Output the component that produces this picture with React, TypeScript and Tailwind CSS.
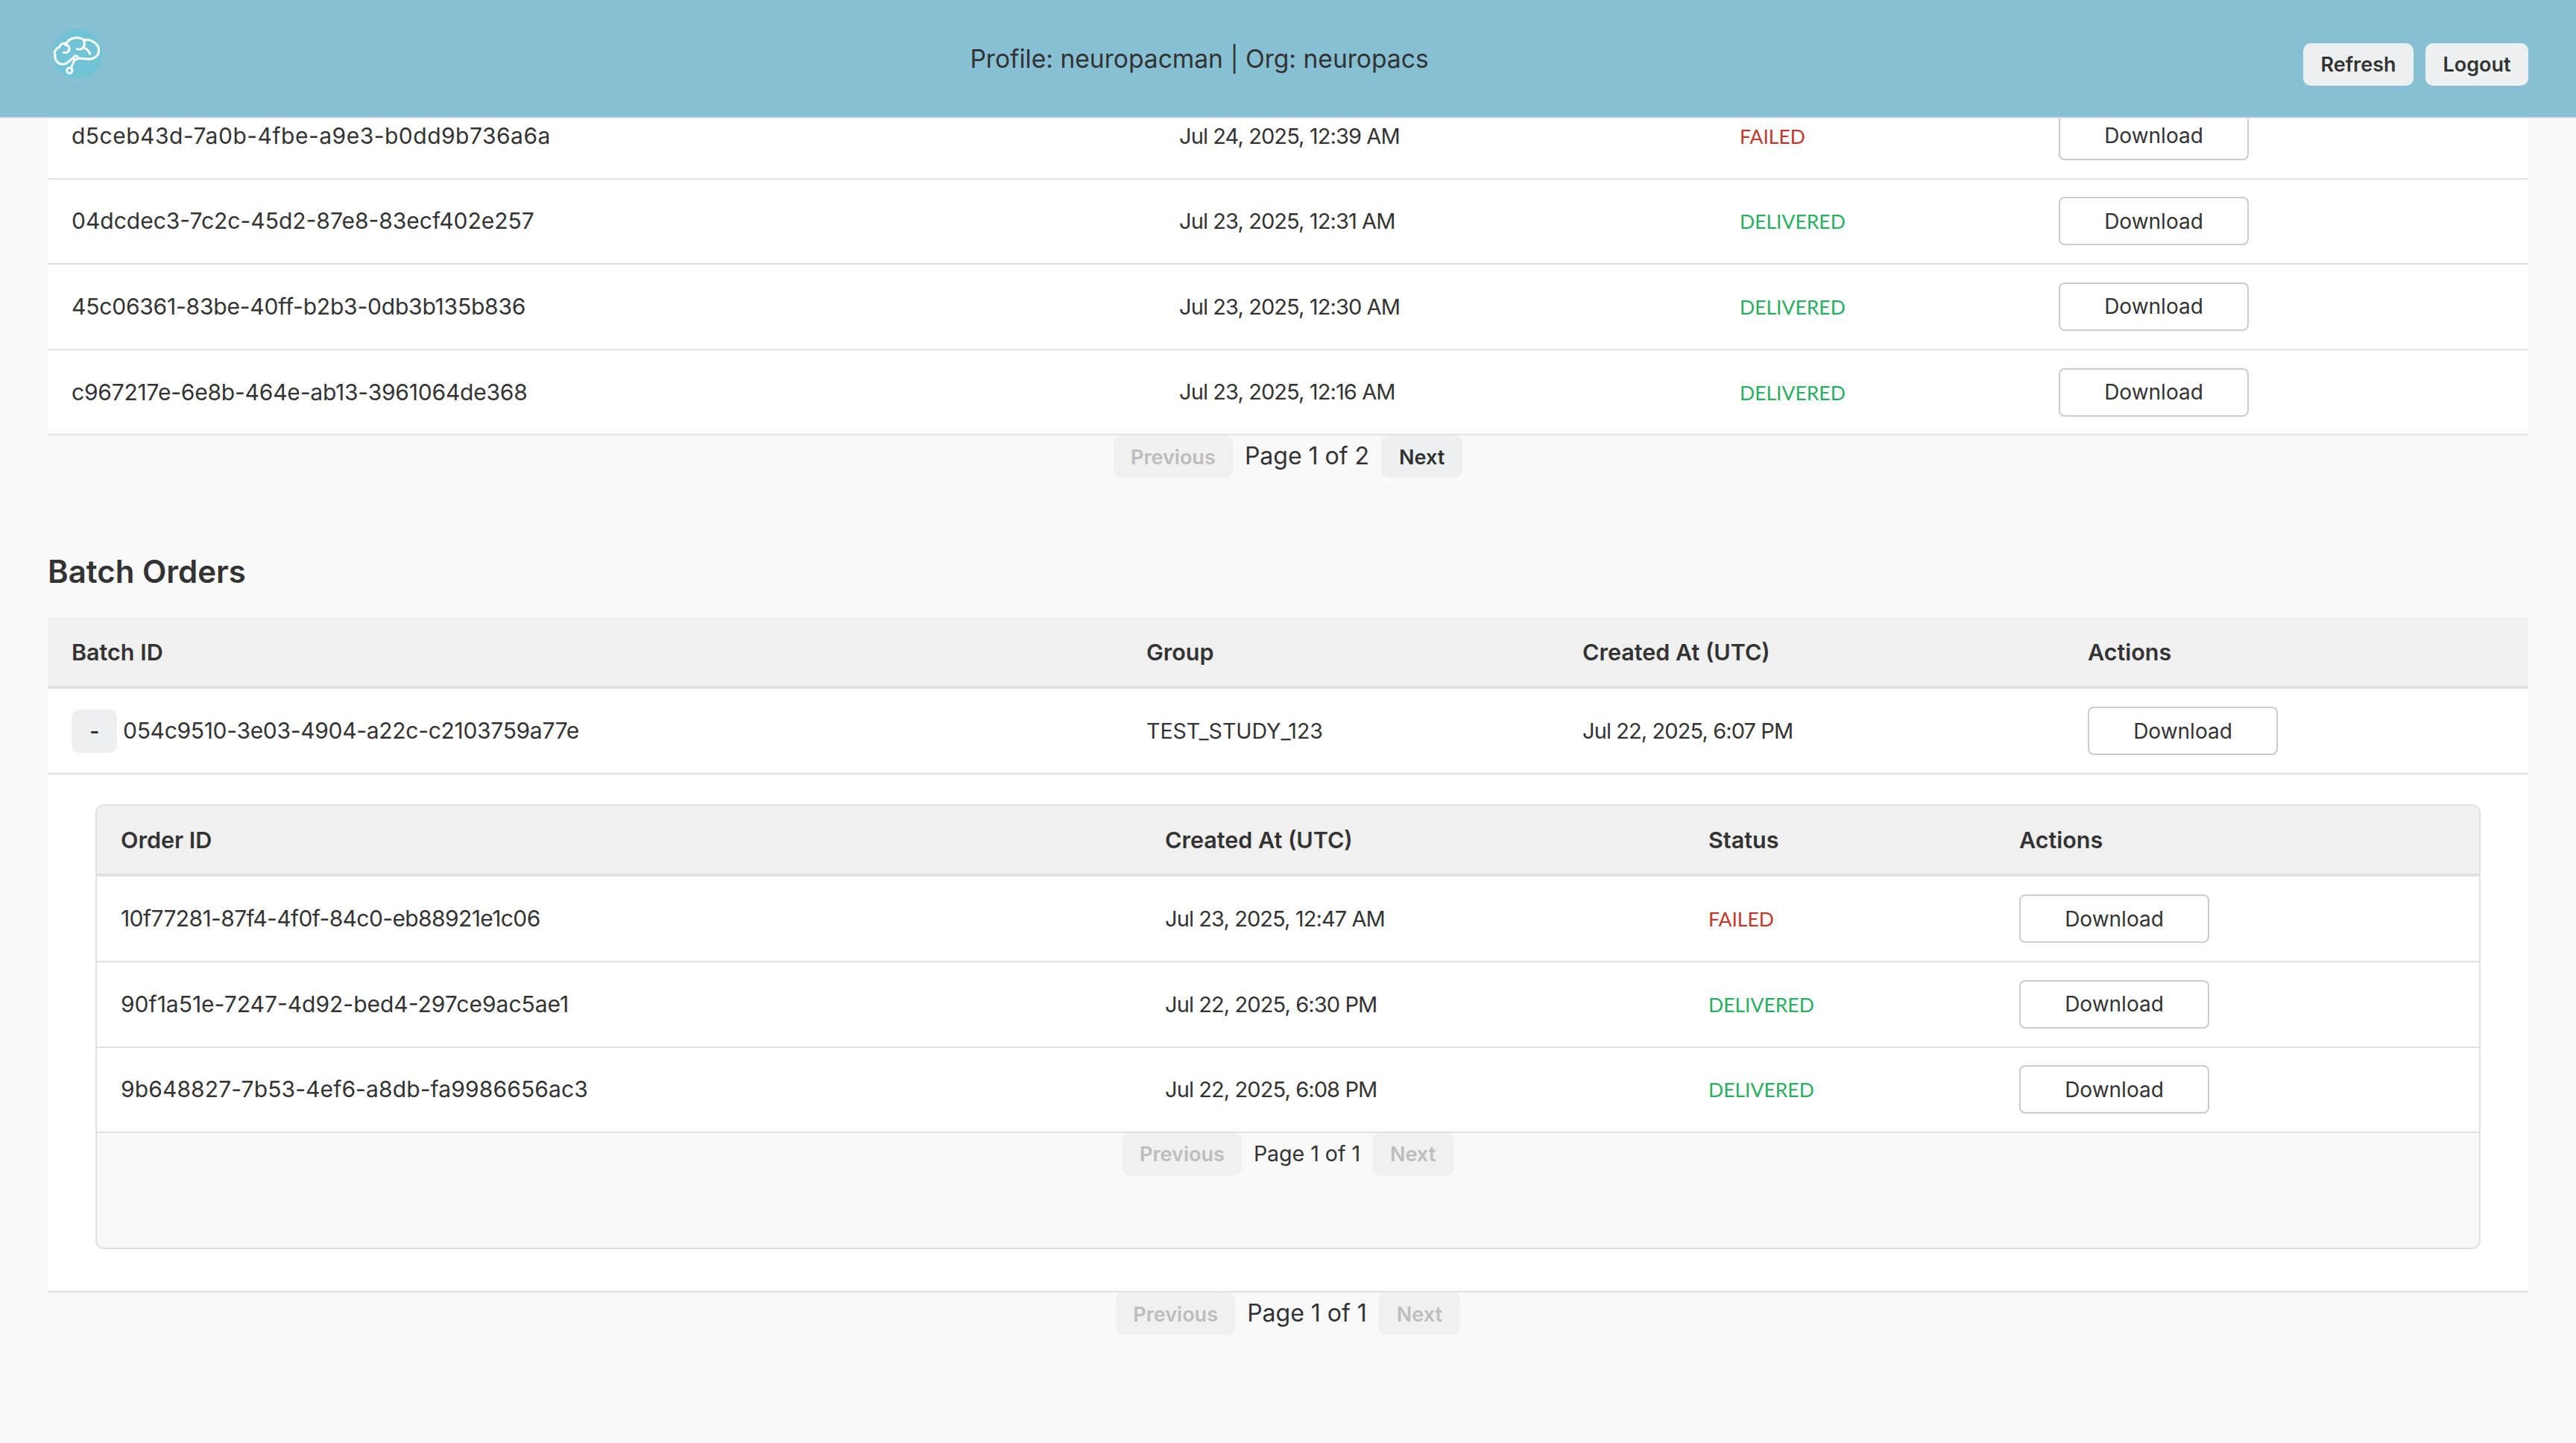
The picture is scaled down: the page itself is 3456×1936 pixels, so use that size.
import React from 'react';

const font = "[font-family:Inter,'Liberation_Sans',sans-serif]";

const Logo = () => (
    <svg viewBox="60 25 204 204" className="w-[68px] h-[68px] ml-[6px] -mr-[10px] mt-[38px]" fill="none" stroke="#fff" strokeWidth="9" strokeLinecap="round" strokeLinejoin="round">
        <circle cx="162" cy="127" r="100" fill="#71c3d6" stroke="none" />
        <path d="M147 143 C135 148 122 172 100 170 C82 168 68 150 72 132 C64 118 78 104 90 100 C92 88 108 82 118 86 C124 70 150 58 170 64 C180 66 186 70 190 72 C215 66 248 88 248 112 C248 135 230 150 205 149 L165 146" />
        <path d="M112 92 C126 92 132 102 128 114 C124 122 114 124 106 122" />
        <path d="M186 72 C194 84 190 104 174 110 L160 109" />
        <path d="M190 104 C202 108 208 118 212 128" />
        <circle cx="155" cy="143" r="8" />
        <path d="M150 151 L137 183" />
        <circle cx="130" cy="195" r="11" />
    </svg>
);

const DownloadButton = () => (
    <button className="w-[255px] h-[65px] bg-white border-2 border-[#ccc] rounded-[8px] text-[28px] text-[#333]">
        Download
    </button>
);

const Status = ({ value }: { value: string }) => (
    <span className={`[font-family:Lato,sans-serif] text-[26.5px] ${value === 'FAILED' ? 'text-[#c0392b]' : 'text-[#27ae60]'}`}>{value}</span>
);

const Pager = ({ page, canNext, text }: { page: string; canNext?: boolean; text: string }) => (
    <div className="flex justify-center items-start">
        <button className="w-[160px] h-[57px] pt-[2px] rounded-[10px] bg-[#f0f0f0] text-[#bdbdbd] text-[27px] font-semibold">Previous</button>
        <span className={`mx-4 text-[#333] ${text}`}>{page}</span>
        <button className={`w-[109px] h-[57px] pt-[2px] rounded-[10px] text-[27px] font-semibold ${canNext ? 'bg-[#ecf0f1] text-[#333]' : 'bg-[#f0f0f0] text-[#bdbdbd]'}`}>Next</button>
    </div>
);

const topOrders = [
    ['d5ceb43d-7a0b-4fbe-a9e3-b0dd9b736a6a', 'Jul 24, 2025, 12:39 AM', 'FAILED', 'tracking-[0.5px]'],
    ['04dcdec3-7c2c-45d2-87e8-83ecf402e257', 'Jul 23, 2025, 12:31 AM', 'DELIVERED', ''],
    ['45c06361-83be-40ff-b2b3-0db3b135b836', 'Jul 23, 2025, 12:30 AM', 'DELIVERED', 'tracking-[-0.2px]'],
    ['c967217e-6e8b-464e-ab13-3961064de368', 'Jul 23, 2025, 12:16 AM', 'DELIVERED', 'tracking-[-0.2px]'],
];

const batchOrders = [
    ['10f77281-87f4-4f0f-84c0-eb88921e1c06', 'Jul 23, 2025, 12:47 AM', 'FAILED', 'tracking-[-0.6px]'],
    ['90f1a51e-7247-4d92-bed4-297ce9ac5ae1', 'Jul 22, 2025, 6:30 PM', 'DELIVERED', ''],
    ['9b648827-7b53-4ef6-a8db-fa9986656ac3', 'Jul 22, 2025, 6:08 PM', 'DELIVERED', 'tracking-[0.12px]'],
];

export default function App() {
    return (
        <div className={`h-[1936px] overflow-hidden bg-[#f9f9f9] text-[#333] ${font}`}>
            {/* Header */}
            <header className="sticky top-0 z-10 h-[159px] bg-[#87c0d3] border-b-2 border-[#e0e0e0] flex justify-between items-start px-16">
                <Logo />
                <h1 className="mt-[57px] text-[33.6px] leading-[44px] font-normal text-[#333]">Profile: neuropacman | Org: neuropacs</h1>
                <div className="flex gap-4 mt-[58px]">
                    <button className="w-[148px] h-[57px] pt-[2px] rounded-[10px] bg-[#ecf0f1] text-[27px] font-semibold text-[#333]">Refresh</button>
                    <button className="w-[138px] h-[57px] pt-[2px] rounded-[10px] bg-[#ecf0f1] text-[27px] font-semibold text-[#333]">Logout</button>
                </div>
            </header>

            <main className="-mt-[33px] px-16">
                {/* Orders, scrolled under the header */}
                <div className="bg-white">
                    {topOrders.map((o) => (
                        <div key={o[0]} className="h-[114.6px] grid grid-cols-[1486px_752px_428px_662px] items-center border-b-2 border-[#e0e0e0] text-[30px]">
                            <div className={`pl-8 ${o[3]}`}>{o[0]}</div>
                            <div className="pl-8 text-[29px] tracking-[-0.9px]">{o[1]}</div>
                            <div className="pl-8"><Status value={o[2]} /></div>
                            <div className="pl-8"><DownloadButton /></div>
                        </div>
                    ))}
                </div>
                <Pager page="Page 1 of 2" canNext text="text-[32px] leading-[56px]" />

                {/* Batch orders */}
                <h2 className="mt-[96px] text-[42px] leading-[60px] font-semibold">Batch Orders</h2>
                <div className="mt-8 bg-white">
                    <div className="h-[95px] grid grid-cols-[1442px_585px_678px_623px] items-center bg-[#f0f0f0] border-b-4 border-[#e0e0e0] text-[30.5px] font-semibold">
                        <div className="pl-8">Batch ID</div>
                        <div className="pl-8">Group</div>
                        <div className="pl-8">Created At (UTC)</div>
                        <div className="pl-8">Actions</div>
                    </div>
                    <div className="h-[115px] grid grid-cols-[1442px_585px_678px_623px] items-center border-b-2 border-[#e0e0e0] text-[30px]">
                        <div className="pl-8 flex items-center tracking-[-0.3px]">
                            <button className="w-[61px] h-[58px] rounded-[10px] bg-[#ecf0f1] font-semibold text-[28px] mr-2">-</button>
                            054c9510-3e03-4904-a22c-c2103759a77e
                        </div>
                        <div className="pl-8 text-[28.5px]">TEST_STUDY_123</div>
                        <div className="pl-8 text-[29px] tracking-[-0.9px]">Jul 22, 2025, 6:07 PM</div>
                        <div className="pl-8"><DownloadButton /></div>
                    </div>

                    {/* Expanded batch */}
                    <div className="px-16 pt-10 pb-14 border-b-2 border-[#e0e0e0]">
                        <div className="h-[597px] bg-[#f9f9f9] border-2 border-[#e0e0e0] rounded-[12px] overflow-hidden">
                            <div className="h-[95px] grid grid-cols-[1401px_729px_417px_649px] items-center bg-[#f0f0f0] border-b-4 border-[#e0e0e0] text-[30.5px] font-semibold">
                                <div className="pl-8">Order ID</div>
                                <div className="pl-8">Created At (UTC)</div>
                                <div className="pl-8">Status</div>
                                <div className="pl-8">Actions</div>
                            </div>
                            <div className="bg-white">
                                {batchOrders.map((o) => (
                                    <div key={o[0]} className="h-[114.6px] grid grid-cols-[1401px_729px_417px_649px] items-center border-b-2 border-[#e0e0e0] text-[30px]">
                                        <div className={`pl-8 ${o[3]}`}>{o[0]}</div>
                                        <div className="pl-8 text-[29px] tracking-[-0.9px]">{o[1]}</div>
                                        <div className="pl-8"><Status value={o[2]} /></div>
                                        <div className="pl-8"><DownloadButton /></div>
                                    </div>
                                ))}
                            </div>
                            <Pager page="Page 1 of 1" text="text-[28.5px] leading-[56px]" />
                        </div>
                    </div>
                </div>
                <Pager page="Page 1 of 1" text="text-[32px] leading-[56px]" />
            </main>
        </div>
    );
}
